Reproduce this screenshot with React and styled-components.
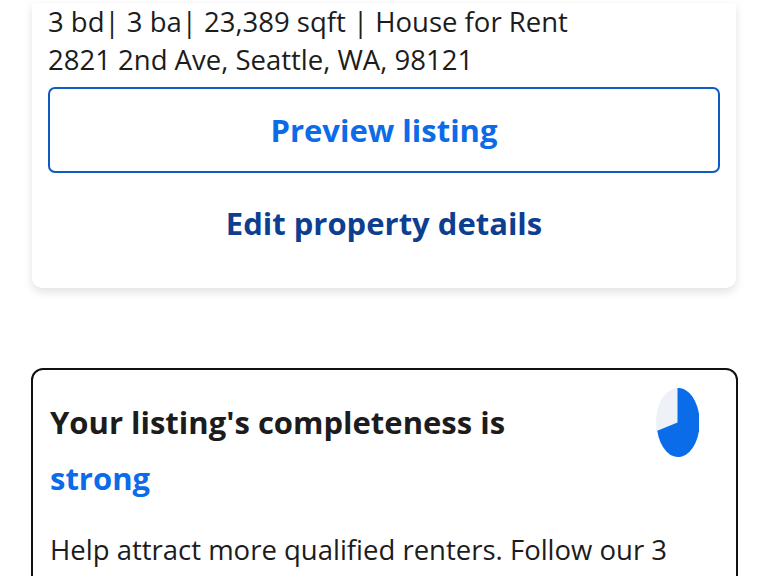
import React from "react";
import styled, { createGlobalStyle } from "styled-components";

const Global = createGlobalStyle`
  html, body { margin: 0; padding: 0; background: #ffffff; }
  body {
    font-family: "Open Sans", "Noto Sans", sans-serif;
    color: #1a1a1a;
    overflow: hidden;
  }
`;

const Page = styled.div`
  display: flex;
  flex-direction: column;
  padding: 0 30px 0 31px;
  gap: 80px;
`;

const PropertyCard = styled.section`
  background: #fff;
  border-radius: 0 0 10px 10px;
  box-shadow: 0 4px 10px rgba(0, 0, 0, 0.12);
  padding: 0 16px 44px;
  margin: 3px 2px 0 1px;
  display: flex;
  flex-direction: column;
`;

const Meta = styled.p`
  margin: 0;
  font-size: 27.5px;
  line-height: 38px;
  color: #1c1c1c;
`;

const OutlineButton = styled.button`
  margin-top: 8px;
  height: 86px;
  border: 2px solid #0d5bc6;
  border-radius: 7px;
  background: #fff;
  font-family: inherit;
  font-weight: 700;
  font-size: 31px;
  color: #0b6be8;
`;

const TextButton = styled.button`
  margin-top: 29px;
  border: none;
  background: none;
  font-family: inherit;
  font-weight: 700;
  font-size: 31px;
  line-height: 40px;
  color: #0d3f91;
`;

const ScoreCard = styled.section`
  border: 2px solid #111;
  border-radius: 12px;
  padding: 18px 18px 0 17px;
  display: flex;
  flex-direction: column;
`;

const ScoreHead = styled.div`
  display: flex;
  justify-content: space-between;
  align-items: flex-start;
`;

const Title = styled.h2`
  margin: 0;
  padding-top: 6px;
  font-size: 31px;
  line-height: 56px;
  font-weight: 700;
  color: #1c1c1c;
`;

const Strong = styled.span`
  display: block;
  color: #0b6be8;
`;

const Pie = styled.svg`
  width: 43px;
  height: 69px;
  margin-right: 19px;
  flex: none;
`;

const Body = styled.p`
  margin: 25px 0 0;
  font-size: 27.5px;
  line-height: 38px;
  color: #1c1c1c;
`;

export default function App() {
  return (
    <>
      <Global />
      <Page>
        <PropertyCard>
          <Meta>3 bd| 3 ba| 23,389 sqft | House for Rent</Meta>
          <Meta>2821 2nd Ave, Seattle, WA, 98121</Meta>
          <OutlineButton>Preview listing</OutlineButton>
          <TextButton>Edit property details</TextButton>
        </PropertyCard>
        <ScoreCard>
          <ScoreHead>
            <Title>
              Your listing's completeness is
              <Strong>strong</Strong>
            </Title>
            <Pie viewBox="0 0 100 100" preserveAspectRatio="none">
              <circle cx="50" cy="50" r="50" fill="#eef1f8" />
              <path d="M50 50 L50 0 A50 50 0 1 1 3 62 Z" fill="#0a6ce8" />
            </Pie>
          </ScoreHead>
          <Body>Help attract more qualified renters. Follow our 3 steps to get your listing in front of more people.</Body>
        </ScoreCard>
      </Page>
    </>
  );
}
